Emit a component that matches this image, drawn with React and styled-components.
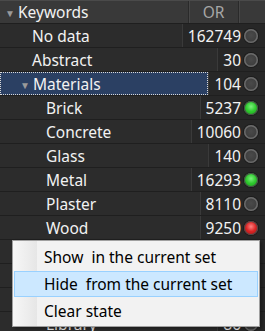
import React from 'react'
import styled, { createGlobalStyle, css } from 'styled-components'

const GlobalStyle = createGlobalStyle`
  html, body {
    margin: 0;
    padding: 0;
    background: #2c2c2c;
    overflow: hidden;
  }
  body {
    font-family: 'Noto Sans', 'Open Sans', sans-serif;
    font-size: 15.5px;
  }
`

const Panel = styled.div`
  position: relative;
  width: 265px;
  height: 331px;
  background: #2c2c2c;
  color: #f2f2f2;
  overflow: hidden;
`

const Header = styled.div`
  display: flex;
  height: 22px;
  background: #393939;
  border-top: 1px solid #4a4a4a;
  border-bottom: 1px solid #1f1f1f;
`

const HeaderTitle = styled.div`
  flex: 1;
  display: flex;
  align-items: center;
  padding-left: 5px;
  gap: 3px;
`

const HeaderCell = styled.div`
  width: ${p => p.$w}px;
  display: flex;
  align-items: center;
  justify-content: center;
  color: #a6a6a6;
  border-left: 1px solid #2a2a2a;
  box-shadow: inset 1px 0 0 #474747;
`

const Toggle = styled.span`
  font-size: 10px;
  color: #9a9a9a;
  width: 10px;
  display: inline-block;
  transform: translateY(1px);
`

const Row = styled.div`
  display: flex;
  height: 23px;
  border-bottom: 1px solid #1f1f1f;
`

const Name = styled.div`
  flex: 1;
  display: flex;
  align-items: center;
  gap: 3px;
  padding-left: ${p => p.$indent}px;
  white-space: nowrap;
  ${p => p.$selected && css`
    background: #2b4063;
    outline: 1px dotted #d8d8d8;
    outline-offset: -1px;
  `}
`

const Count = styled.div`
  display: flex;
  align-items: center;
  gap: 3px;
  padding: 0 7px 0 5px;
  background: #272727;
  border-left: 1px solid #3a3a3a;
  color: #f2f2f2;
`

const dotColors = {
  off: css`
    background: radial-gradient(circle at 50% 45%, #4a4a4a 0%, #3c3c3c 70%);
    box-shadow: inset 0 0 0 1.5px #6a6a6a, 0 0 0 1px #1c1c1c;
  `,
  on: css`
    background: radial-gradient(circle at 50% 40%, #7cf07c 0%, #2ec82e 45%, #159a15 100%);
    box-shadow: inset 0 0 0 1px #4a4a4a, 0 0 0 1px #1c1c1c;
  `,
  neg: css`
    background: radial-gradient(circle at 50% 40%, #ff8080 0%, #d82424 45%, #a01212 100%);
    box-shadow: inset 0 0 0 1px #4a4a4a, 0 0 0 1px #1c1c1c;
  `
}

const Dot = styled.span`
  width: 14px;
  height: 14px;
  border-radius: 50%;
  ${p => dotColors[p.$state]}
`

const Menu = styled.div`
  position: absolute;
  left: 12px;
  top: 240px;
  width: 246px;
  padding: 3px 0 2px 0;
  background: #f2f2f2;
  border: 1px solid #a0a0a0;
  box-shadow: 2px 2px 3px rgba(0,0,0,0.35);
  color: #000;
  &::before {
    content: '';
    position: absolute;
    left: 0;
    top: 0;
    bottom: 0;
    width: 24px;
    background: linear-gradient(90deg, #f7f7f7, #e6e6e6);
  }
`

const MenuItem = styled.div`
  position: relative;
  height: 24px;
  margin: 0 1px 1px 1px;
  padding-left: 29px;
  display: flex;
  align-items: center;
  border: 1px solid transparent;
  white-space: pre;
  &:last-child {
    margin-bottom: 0;
  }
  ${p => p.$active && css`
    background: #cce8ff;
    border-color: #99d1ff;
  `}
`

const rows = [
  { name: 'No data', count: 162749, indent: 32 },
  { name: 'Abstract', count: 30, indent: 32 },
  { name: 'Materials', count: 104, indent: 20, open: true, selected: true },
  { name: 'Brick', count: 5237, indent: 46, state: 'on' },
  { name: 'Concrete', count: 10060, indent: 46 },
  { name: 'Glass', count: 140, indent: 46 },
  { name: 'Metal', count: 16293, indent: 46, state: 'on' },
  { name: 'Plaster', count: 8110, indent: 46 },
  { name: 'Wood', count: 9250, indent: 46, state: 'neg' },
  { name: 'Interior', count: 2417, indent: 32 },
  { name: 'Landscape', count: 1380, indent: 32 },
  { name: 'Lighting', count: 512, indent: 46 },
  { name: 'Library', count: 86, indent: 46 }
]

const App = () => {
  return <Panel>
    <GlobalStyle />
    <Header>
      <HeaderTitle><Toggle>▼</Toggle>Keywords</HeaderTitle>
      <HeaderCell $w={49}>OR</HeaderCell>
      <HeaderCell $w={26} />
    </Header>
    { rows.map(r => <Row key={r.name}>
      <Name $indent={r.indent} $selected={r.selected}>
        { r.open && <Toggle>▼</Toggle> }{ r.name }
      </Name>
      <Count>{ r.count }<Dot $state={r.state || 'off'} /></Count>
    </Row>)}
    <Menu>
      <MenuItem>Show  in the current set</MenuItem>
      <MenuItem $active>Hide  from the current set</MenuItem>
      <MenuItem>Clear state</MenuItem>
    </Menu>
  </Panel>
}

export default App
